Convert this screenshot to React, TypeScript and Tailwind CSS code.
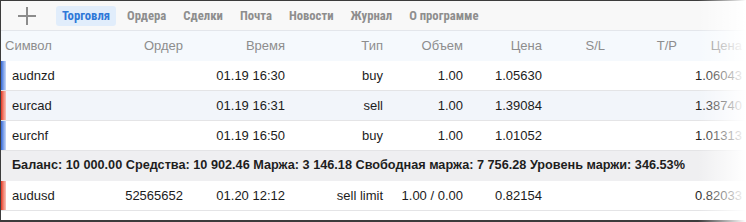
import React from 'react'

type Row = {
  symbol: string
  order: string
  time: string
  type: string
  volume: string
  price: string
  sl: string
  tp: string
  current: string
  side: 'buy' | 'sell'
  shaded?: boolean
}

const positions: Row[] = [
  { symbol: 'audnzd', order: '', time: '01.19 16:30', type: 'buy', volume: '1.00', price: '1.05630', sl: '', tp: '', current: '1.06043', side: 'buy' },
  { symbol: 'eurcad', order: '', time: '01.19 16:31', type: 'sell', volume: '1.00', price: '1.39084', sl: '', tp: '', current: '1.38740', side: 'sell', shaded: true },
  { symbol: 'eurchf', order: '', time: '01.19 16:50', type: 'buy', volume: '1.00', price: '1.01052', sl: '', tp: '', current: '1.01313', side: 'buy' },
]

const orders: Row[] = [
  { symbol: 'audusd', order: '52565652', time: '01.20 12:12', type: 'sell limit', volume: '1.00 / 0.00', price: '0.82154', sl: '', tp: '', current: '0.82033', side: 'sell' },
]

const tabs = ['Торговля', 'Ордера', 'Сделки', 'Почта', 'Новости', 'Журнал', 'О программе']

const cols = 'grid grid-cols-[119px_63px_102px_98px_80px_79px_63px_72px_65px]'

const TableRow = ({ row }: { row: Row }) => (
  <div className={`${cols} h-[30px] items-center border-b border-[#e4e4e6] text-[13px] text-[#1c1c1c] ${row.shaded ? 'bg-[#f2f5fa]' : 'bg-white'}`}>
    <div className="flex h-full items-center">
      <div
        className={`h-full w-[5px] ${row.side === 'buy' ? 'bg-gradient-to-r from-[#3567d6] to-[#cbd9f5]' : 'bg-gradient-to-r from-[#e2301c] to-[#f6c4bd]'}`}
      />
      <span className="pl-[6px]">{row.symbol}</span>
    </div>
    <div className="text-right">{row.order}</div>
    <div className="text-right">{row.time}</div>
    <div className="text-right">{row.type}</div>
    <div className="text-right">{row.volume}</div>
    <div className="text-right">{row.price}</div>
    <div className="text-right">{row.sl}</div>
    <div className="text-right">{row.tp}</div>
    <div className="text-right">{row.current}</div>
  </div>
)

export default function App() {
  return (
    <div className="relative h-[222px] w-[746px] overflow-hidden bg-white" style={{ fontFamily: '"Liberation Sans", Arial, sans-serif' }}>
      <div className="h-full border-b-2 border-l border-t border-[#3c3c3c]">
        {/* Tabs */}
        <div className="flex h-[30px] items-center border-b border-[#e3e6eb] bg-[#f8f8f8]">
          <div className="flex w-[50px] items-center justify-center pl-[2px]">
            <svg width="20" height="20" viewBox="0 0 20 20">
              <path d="M10 1v18M1 10h18" stroke="#8c8c8c" strokeWidth="2" fill="none" />
            </svg>
          </div>
          <div className="ml-[5px] flex gap-[5px]" style={{ fontFamily: '"Liberation Sans Narrow", "Roboto Condensed", Roboto, sans-serif' }}>
            {tabs.map((t, i) => (
              <div
                key={t}
                className={`rounded-[3px] px-[6px] py-[3px] text-[12.7px] font-bold leading-[14px] ${i === 0 ? 'bg-[#e1edfb] text-[#2f78d8]' : 'text-[#8e8e8e]'} ${i === 6 ? 'text-[#7a7a7a]' : ''}`}
              >
                {t}
              </div>
            ))}
          </div>
        </div>

        {/* Header */}
        <div className={`${cols} h-[30px] items-center bg-[#f5f9fd] text-[13px] text-[#8d8d8d]`}>
          <div className="pl-[4px]">Символ</div>
          <div className="text-right">Ордер</div>
          <div className="text-right">Время</div>
          <div className="text-right">Тип</div>
          <div className="text-right">Объем</div>
          <div className="text-right">Цена</div>
          <div className="text-right">S/L</div>
          <div className="text-right">T/P</div>
          <div className="text-right">Цена</div>
        </div>

        {positions.map((r) => (
          <TableRow key={r.symbol} row={r} />
        ))}

        {/* Account summary */}
        <div className="flex h-[30px] items-center bg-[#efeff1] pl-[11px] text-[12.7px] font-bold text-[#1e1e1e]">
          Баланс: 10 000.00 Средства: 10 902.46 Маржа: 3 146.18 Свободная маржа: 7 756.28 Уровень маржи: 346.53%
        </div>

        {orders.map((r) => (
          <TableRow key={r.symbol} row={r} />
        ))}
      </div>

      {/* right edge fade */}
      <div className="pointer-events-none absolute right-0 top-0 h-full w-[48px] bg-gradient-to-r from-white/0 to-white" />
    </div>
  )
}
